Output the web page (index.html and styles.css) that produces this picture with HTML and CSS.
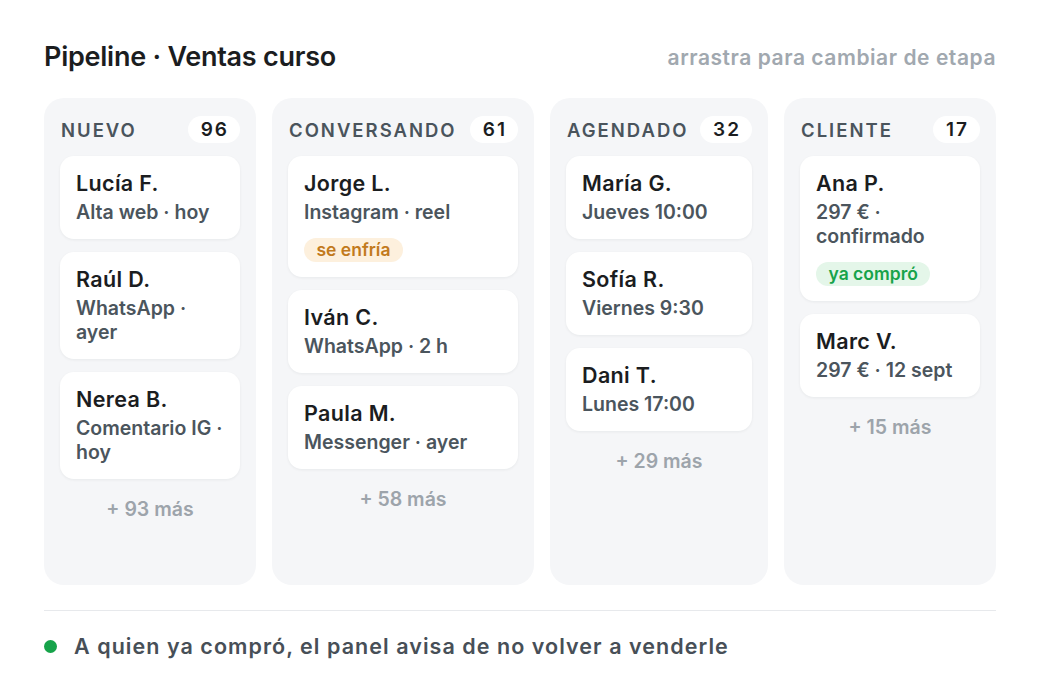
FILE: index.html
```html
<!DOCTYPE html>
<html lang="es">
<head>
<meta charset="utf-8">
<title>Pipeline · Ventas curso</title>
<link rel="stylesheet" href="styles.css">
</head>
<body>
<div class="page">
  <header class="top">
    <h1 class="title">Pipeline · Ventas curso</h1>
    <span class="hint">arrastra para cambiar de etapa</span>
  </header>
  <main class="board">
    <section class="col">
      <div class="col-head"><span class="col-name">NUEVO</span><span class="count">96</span></div>
      <div class="card"><div class="name">Lucía F.</div><div class="sub">Alta web · hoy</div></div>
      <div class="card"><div class="name">Raúl D.</div><div class="sub">WhatsApp ·<br>ayer</div></div>
      <div class="card"><div class="name">Nerea B.</div><div class="sub">Comentario IG ·<br>hoy</div></div>
      <div class="more">+ 93 más</div>
    </section>
    <section class="col">
      <div class="col-head"><span class="col-name">CONVERSANDO</span><span class="count">61</span></div>
      <div class="card"><div class="name">Jorge L.</div><div class="sub">Instagram · reel</div><span class="tag warm">se enfría</span></div>
      <div class="card"><div class="name">Iván C.</div><div class="sub">WhatsApp · 2 h</div></div>
      <div class="card"><div class="name">Paula M.</div><div class="sub">Messenger · ayer</div></div>
      <div class="more">+ 58 más</div>
    </section>
    <section class="col">
      <div class="col-head"><span class="col-name">AGENDADO</span><span class="count">32</span></div>
      <div class="card"><div class="name">María G.</div><div class="sub">Jueves 10:00</div></div>
      <div class="card"><div class="name">Sofía R.</div><div class="sub">Viernes 9:30</div></div>
      <div class="card"><div class="name">Dani T.</div><div class="sub">Lunes 17:00</div></div>
      <div class="more">+ 29 más</div>
    </section>
    <section class="col">
      <div class="col-head"><span class="col-name">CLIENTE</span><span class="count">17</span></div>
      <div class="card"><div class="name">Ana P.</div><div class="sub">297 € ·<br>confirmado</div><span class="tag done">ya compró</span></div>
      <div class="card"><div class="name">Marc V.</div><div class="sub">297 € · 12 sept</div></div>
      <div class="more">+ 15 más</div>
    </section>
  </main>
  <footer class="foot">
    <span class="dot"></span>
    <span class="foot-text">A quien ya compró, el panel avisa de no volver a venderle</span>
  </footer>
</div>
</body>
</html>
```

FILE: styles.css
```css
* { box-sizing: border-box; }
html, body { margin: 0; padding: 0; background: #ffffff; }
body {
  font-family: Inter, "Noto Sans", "Liberation Sans", sans-serif;
  color: #1b1d1f;
}
.page {
  width: 1040px;
  height: 700px;
  padding: 41px 44px 0 44px;
}
.top {
  display: flex;
  justify-content: space-between;
  align-items: center;
  height: 32px;
}
.title {
  margin: 0;
  font-size: 27px;
  line-height: 32px;
  font-weight: 600;
  letter-spacing: -0.25px;
  color: #1b1d1f;
  white-space: nowrap;
}
.hint {
  font-size: 21px;
  font-weight: 600;
  letter-spacing: 0.55px;
  color: #a1a8af;
  white-space: nowrap;
}
.board {
  margin-top: 25px;
  display: grid;
  grid-template-columns: 212px 262px 218px 212px;
  column-gap: 16px;
  height: 487px;
}
.col {
  background: #f5f6f8;
  border-radius: 20px;
  padding: 18px 16px 16px 16px;
  display: flex;
  flex-direction: column;
  gap: 13px;
}
.col-head {
  display: flex;
  justify-content: space-between;
  align-items: center;
  height: 27px;
}
.col-name {
  font-size: 18.5px;
  font-weight: 600;
  letter-spacing: 2px;
  color: #4a545c;
  padding-left: 1px;
  white-space: nowrap;
}
.count {
  background: #ffffff;
  border-radius: 14px;
  height: 27px;
  line-height: 27px;
  padding: 0 11px 0 13px;
  font-size: 19px;
  font-weight: 600;
  letter-spacing: 2px;
  color: #1b1d1f;
}
.card {
  background: #ffffff;
  border-radius: 14px;
  padding: 14px 16px 15px 16px;
  box-shadow: 0 1px 3px rgba(20, 30, 40, 0.06);
}
.name {
  font-size: 21.5px;
  line-height: 26px;
  font-weight: 600;
  letter-spacing: 0.35px;
  color: #1b1d1f;
  white-space: nowrap;
}
.sub {
  margin-top: 4px;
  font-size: 19.5px;
  line-height: 24px;
  font-weight: 600;
  color: #4b555d;
  white-space: nowrap;
}
.tag {
  display: inline-block;
  margin-top: 14px;
  height: 24px;
  line-height: 24px;
  padding: 0 12.5px;
  border-radius: 12px;
  font-size: 17.5px;
  font-weight: 600;
  white-space: nowrap;
}
.tag.warm { background: #fdf0dd; color: #c27a1c; }
.tag.done { background: #e4f6e9; color: #17a34a; }
.more {
  margin-top: 5px;
  text-align: center;
  font-size: 19.5px;
  line-height: 24px;
  font-weight: 600;
  color: #9da4ab;
}
.foot {
  margin-top: 25px;
  border-top: 1px solid #e7e9ec;
  padding-top: 23px;
  display: flex;
  align-items: center;
  gap: 17px;
}
.dot {
  width: 13px;
  height: 13px;
  border-radius: 50%;
  background: #16a34a;
  flex: none;
}
.foot-text {
  font-size: 21.5px;
  line-height: 24px;
  font-weight: 600;
  letter-spacing: 1.05px;
  color: #474f57;
  white-space: nowrap;
}
```
